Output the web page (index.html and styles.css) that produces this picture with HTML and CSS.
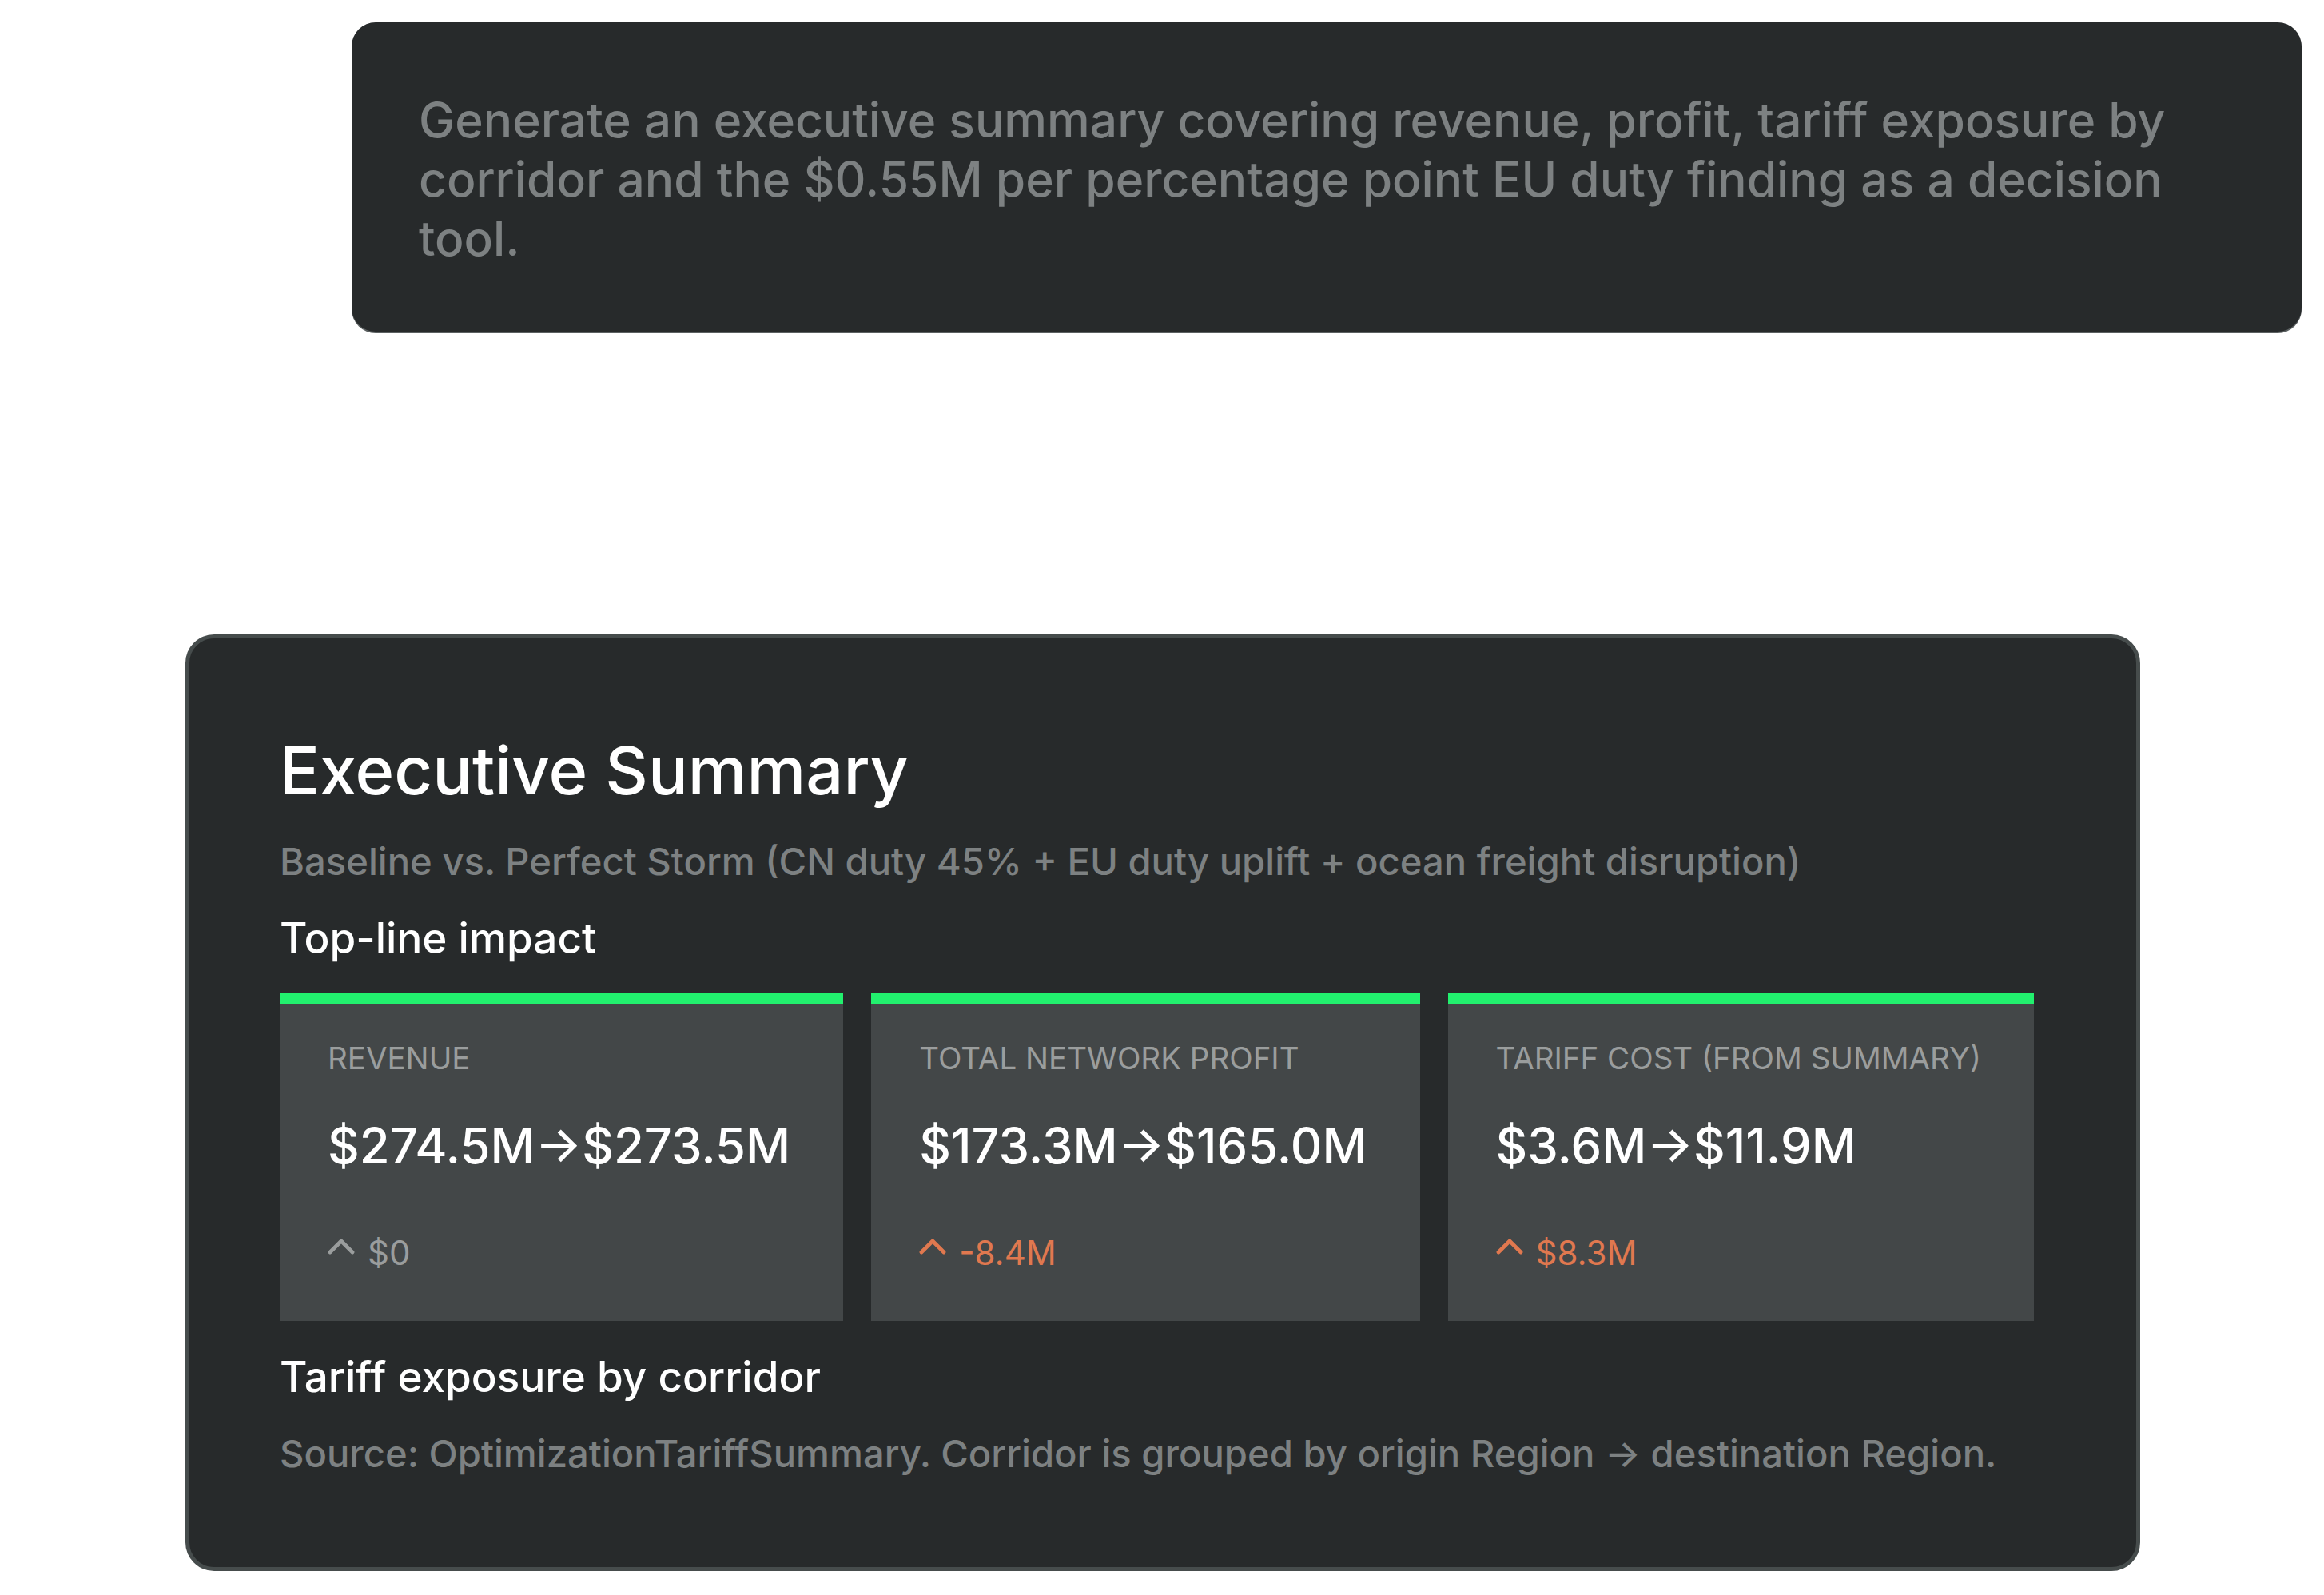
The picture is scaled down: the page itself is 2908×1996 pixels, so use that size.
FILE: index.html
```html
<!DOCTYPE html>
<html lang="en">
<head>
<meta charset="utf-8">
<title>Executive Summary</title>
<link rel="stylesheet" href="styles.css">
</head>
<body>
<main class="thread">
  <div class="prompt">
    <p class="prompt-text">Generate an executive summary covering revenue, profit, tariff exposure by corridor and the $0.55M per percentage point EU duty finding as a decision tool.</p>
  </div>

  <section class="report">
    <h1 class="report-title">Executive Summary</h1>
    <p class="report-sub">Baseline vs. Perfect Storm (CN duty 45% + EU duty uplift + ocean freight disruption)</p>
    <h2 class="report-h2">Top-line impact</h2>

    <div class="kpis">
      <div class="kpi">
        <div class="kpi-label">REVENUE</div>
        <div class="kpi-value">$274.5M→$273.5M</div>
        <div class="kpi-delta neutral">
          <svg class="caret" viewBox="0 0 34 20" aria-hidden="true"><polyline points="3,17 17,3 31,17"/></svg>
          <span>$0</span>
        </div>
      </div>
      <div class="kpi">
        <div class="kpi-label">TOTAL NETWORK PROFIT</div>
        <div class="kpi-value">$173.3M→$165.0M</div>
        <div class="kpi-delta negative">
          <svg class="caret" viewBox="0 0 34 20" aria-hidden="true"><polyline points="3,17 17,3 31,17"/></svg>
          <span>-8.4M</span>
        </div>
      </div>
      <div class="kpi">
        <div class="kpi-label">TARIFF COST (FROM SUMMARY)</div>
        <div class="kpi-value">$3.6M→$11.9M</div>
        <div class="kpi-delta negative">
          <svg class="caret" viewBox="0 0 34 20" aria-hidden="true"><polyline points="3,17 17,3 31,17"/></svg>
          <span>$8.3M</span>
        </div>
      </div>
    </div>

    <h2 class="report-h2">Tariff exposure by corridor</h2>
    <p class="report-sub">Source: OptimizationTariffSummary. Corridor is grouped by origin Region → destination Region.</p>
  </section>
</main>
</body>
</html>
```
FILE: styles.css
```css
* { box-sizing: border-box; }

html, body {
  margin: 0;
  padding: 0;
  background: #ffffff;
}

body {
  font-family: Inter, "Noto Sans", "DejaVu Sans", sans-serif;
  color: #ffffff;
}

.thread {
  display: flex;
  flex-direction: column;
  padding: 28px 28px 0 0;
}

/* user prompt bubble */
.prompt {
  margin-left: 440px;
  width: 2440px;
  background: #272a2b;
  border-radius: 30px;
  box-shadow: 0 2px 0 #5c6162;
  padding: 85px 84px 80px 84px;
}

.prompt-text {
  margin: 0;
  font-size: 60.5px;
  line-height: 74px;
  font-weight: 500;
  color: #7d8182;
}

/* report card */
.report {
  margin-top: 379px;
  margin-left: 232px;
  width: 2446px;
  background: #272a2b;
  border: 5px solid #464c4c;
  border-radius: 36px;
  padding: 115px 113px 113px 113px;
  display: flex;
  flex-direction: column;
  gap: 35px;
}

.report-title {
  margin: 0;
  font-size: 83px;
  line-height: 100px;
  font-weight: 500;
  color: #ffffff;
}

.report-sub {
  margin: 0;
  font-size: 47.2px;
  line-height: 58px;
  font-weight: 500;
  color: #7d8182;
}

.report-h2 {
  margin: 0;
  font-size: 53px;
  line-height: 64px;
  font-weight: 500;
  color: #ffffff;
}

.kpis {
  display: flex;
  gap: 35px;
  margin-top: 2px;
  margin-bottom: 3px;
}

.kpi {
  flex: 0 0 auto;
  background: #434748;
  border-top: 13px solid #22f06e;
  padding: 45px 66px 60px 60px;
  display: flex;
  flex-direction: column;
}

.kpi-label {
  font-size: 38.5px;
  line-height: 46px;
  font-weight: 400;
  color: #9a9d9d;
  white-space: nowrap;
}

.kpi-value {
  margin-top: 49px;
  font-size: 61.5px;
  line-height: 75px;
  font-weight: 500;
  color: #ffffff;
  white-space: nowrap;
}

.kpi-delta {
  margin-top: 71px;
  display: flex;
  align-items: flex-start;
  gap: 16px;
  font-size: 42px;
  line-height: 51px;
  font-weight: 400;
}

.kpi-delta.neutral { color: #9a9d9d; }
.kpi-delta.negative { color: #e0784f; }

.caret {
  width: 34px;
  height: 20px;
  margin-top: 8px;
  flex: 0 0 auto;
}

.caret polyline {
  fill: none;
  stroke: currentColor;
  stroke-width: 4.8;
  stroke-linecap: round;
  stroke-linejoin: round;
}
```
